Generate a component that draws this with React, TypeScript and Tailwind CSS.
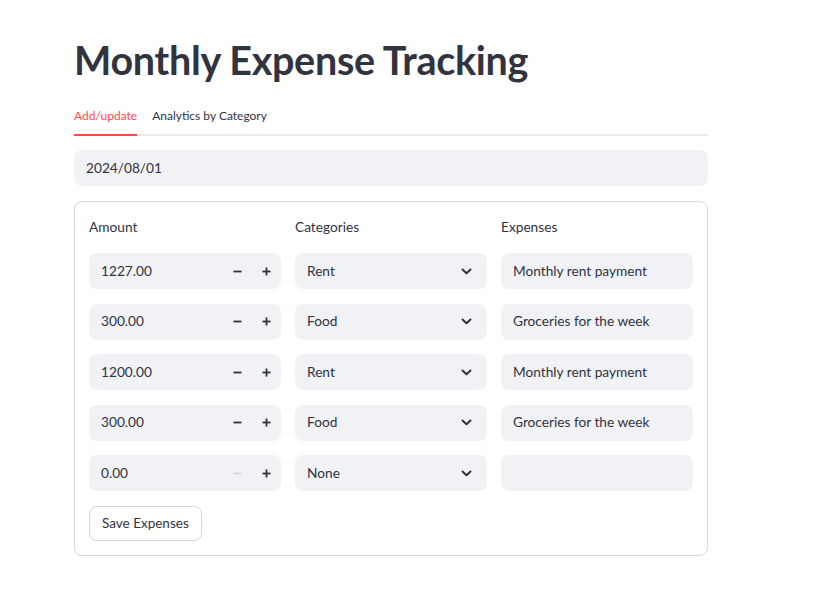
import React from "react";

const rows = [
  { amount: "1227.00", category: "Rent", note: "Monthly rent payment" },
  { amount: "300.00", category: "Food", note: "Groceries for the week" },
  { amount: "1200.00", category: "Rent", note: "Monthly rent payment" },
  { amount: "300.00", category: "Food", note: "Groceries for the week" },
  { amount: "0.00", category: "None", note: "" },
];

const Minus = ({ off }: { off?: boolean }) => (
  <svg width="9" height="9" viewBox="0 0 10 10">
    <rect x="0.5" y="4" width="9" height="2" fill={off ? "#d5d6da" : "#31333f"} />
  </svg>
);

const Plus = () => (
  <svg width="9" height="9" viewBox="0 0 10 10" fill="#31333f">
    <rect x="0.5" y="4" width="9" height="2" />
    <rect x="4" y="0.5" width="2" height="9" />
  </svg>
);

const Chevron = () => (
  <svg width="11" height="7" viewBox="0 0 11 7" fill="none">
    <path d="M1.5 1.5 L5.5 5.3 L9.5 1.5" stroke="#31333f" strokeWidth="2" strokeLinecap="round" strokeLinejoin="round" />
  </svg>
);

const App = () => {
  return (
    <main
      className="min-h-screen bg-white text-[#31333f]"
      style={{ fontFamily: "Lato, 'Noto Sans', sans-serif" }}
    >
      <div className="w-[634px] ml-[74px] pt-[34px]">
        <h1 className="text-[39.5px] leading-[51px] font-bold tracking-[-0.3px]">
          Monthly Expense Tracking
        </h1>

        <div className="mt-[10px] flex border-b-2 border-[#eaebee] text-[12px]">
          <div className="text-[#ff4b4b] pt-[12px] pb-[9px] border-b-2 border-[#ff4b4b] -mb-[2px]">
            Add/update
          </div>
          <div className="ml-[15px] pt-[12px] pb-[9px]">Analytics by Category</div>
        </div>

        <div className="mt-[14px] h-[36px] rounded-lg bg-[#f0f2f6] flex items-center px-3 text-[13.7px]">
          2024/08/01
        </div>

        <div className="mt-[15px] rounded-lg border border-[#d6d6d9] px-[14px] pt-[15px] pb-[14px]">
          <div className="grid grid-cols-3 gap-x-[14px] text-[13.7px] leading-5">
            <div>Amount</div>
            <div>Categories</div>
            <div>Expenses</div>
          </div>

          <div className="mt-[16px] flex flex-col gap-[14.5px]">
            {rows.map((r, i) => (
              <div key={i} className="grid grid-cols-3 gap-x-[14px] text-[13.7px]">
                <div className="h-[36px] rounded-lg bg-[#f0f2f6] flex items-center pl-3">
                  <span className="flex-1">{r.amount}</span>
                  <span className="w-[29px] h-full flex items-center justify-center">
                    <Minus off={r.amount === "0.00"} />
                  </span>
                  <span className="w-[29px] h-full flex items-center justify-center">
                    <Plus />
                  </span>
                </div>
                <div className="h-[36px] rounded-lg bg-[#f0f2f6] flex items-center justify-between pl-3 pr-[15px]">
                  <span>{r.category}</span>
                  <Chevron />
                </div>
                <div className="h-[36px] rounded-lg bg-[#f0f2f6] flex items-center px-3">
                  {r.note}
                </div>
              </div>
            ))}
          </div>

          <button className="mt-[15px] h-[35px] px-3 rounded-lg border border-[#d6d6d9] bg-white text-[13.5px]">
            Save Expenses
          </button>
        </div>
      </div>
    </main>
  );
};

export default App;
